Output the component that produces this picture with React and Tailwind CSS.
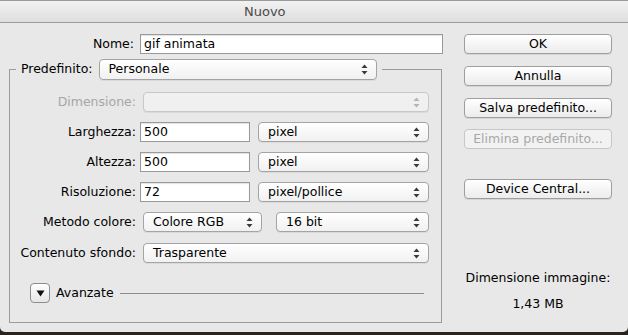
import React from 'react';

const font = { fontFamily: '"DejaVu Sans", "Liberation Sans", sans-serif' };

function Arrows({ disabled }) {
  const c = disabled ? '#b4b4b4' : '#3a3a3a';
  return (
    <svg width="7" height="11" viewBox="0 0 7 11" className="shrink-0">
      <path d="M3.5 0.5 L6.5 4 L0.5 4 Z" fill={c} />
      <path d="M3.5 10.5 L6.5 7 L0.5 7 Z" fill={c} />
    </svg>
  );
}

function Popup({ value, className = '', disabled }) {
  return (
    <div
      className={`h-[20px] flex items-center justify-between pl-[9px] pr-[8px] rounded-[4px] border shadow-[0_1px_0_rgba(0,0,0,0.06)] ${
        disabled
          ? 'border-[#c8c8c8] bg-[#f0f0f0]'
          : 'border-[#a4a4a4] bg-gradient-to-b from-[#ffffff] to-[#f1f1f1]'
      } ${className}`}
    >
      <span className="text-black leading-none">{value}</span>
      <Arrows disabled={disabled} />
    </div>
  );
}

function Field({ value, className = '' }) {
  return (
    <div className={`h-[20px] flex items-center px-[3px] bg-white border border-[#9a9a9a] shadow-[inset_0_1px_1px_rgba(0,0,0,0.12)] leading-none ${className}`}>
      {value}
    </div>
  );
}

function Button({ children, disabled }) {
  return (
    <div
      className={`h-[20px] w-[148px] flex items-center justify-center rounded-[4px] border leading-none ${
        disabled
          ? 'border-[#c6c6c6] bg-[#f2f2f2] text-[#a8a8a8]'
          : 'border-[#9e9e9e] bg-gradient-to-b from-[#ffffff] to-[#ececec] text-black shadow-[0_1px_0_rgba(0,0,0,0.08)]'
      }`}
    >
      {children}
    </div>
  );
}

function Row({ label, children, disabled }) {
  return (
    <div className="flex items-center h-[20px]">
      <div className={`w-[130px] text-right pr-[4px] ${disabled ? 'text-[#a6a6a6]' : 'text-black'}`}>{label}</div>
      {children}
    </div>
  );
}

export default function App() {
  return (
    <div className="w-[628px] h-[335px] bg-[#2a2420] text-[12.5px]" style={font}>
      <div className="h-[332px] bg-[#e8e8e8] rounded-b-[5px] flex flex-col overflow-hidden">
        {/* title bar */}
        <div className="h-[23px] shrink-0 flex items-center pl-[244px] bg-gradient-to-b from-[#f2f2f2] to-[#dedede] border-b border-[#9c9c9c] border-t border-t-[#9a9a9a] text-[#4a4a4a] text-[13px]">
          Nuovo
        </div>

        <div className="flex pt-[11px]">
          {/* left column */}
          <div className="w-[433px] ml-[9px] flex flex-col">
            <div className="flex items-center h-[20px]">
              <div className="w-[131px] text-right pr-[6px]">Nome:</div>
              <Field value="gif animata" className="flex-1 -mr-[1px]" />
            </div>

            <fieldset className="mt-[5px] h-[264px] border border-[#9c9c9c] px-0">
              <legend className="ml-[6px] px-[5px] flex items-center h-[21px]">
                <span className="mr-[6px]">Predefinito:</span>
                <Popup value="Personale" className="w-[278px] h-[21px]" />
              </legend>

              <div className="flex flex-col gap-[10px] mt-[12px]">
                <Row label="Dimensione:" disabled>
                  <Popup value="" disabled className="ml-[3px] w-[286px]" />
                </Row>
                <Row label="Larghezza:">
                  <Field value="500" className="w-[110px]" />
                  <Popup value="pixel" className="ml-[8px] w-[171px]" />
                </Row>
                <Row label="Altezza:">
                  <Field value="500" className="w-[110px]" />
                  <Popup value="pixel" className="ml-[8px] w-[171px]" />
                </Row>
                <Row label="Risoluzione:">
                  <Field value="72" className="w-[110px]" />
                  <Popup value="pixel/pollice" className="ml-[8px] w-[171px]" />
                </Row>
                <Row label="Metodo colore:">
                  <Popup value="Colore RGB" className="ml-[3px] w-[119px]" />
                  <Popup value="16 bit" className="ml-[14px] w-[153px]" />
                </Row>
                <div className="mt-[1px]">
                  <Row label="Contenuto sfondo:">
                    <Popup value="Trasparente" className="ml-[3px] w-[286px]" />
                  </Row>
                </div>
              </div>

              <div className="flex items-center mt-[20px] pl-[20px] pr-[17px]">
                <div className="w-[20px] h-[20px] rounded-[4px] border border-[#8e8e8e] bg-gradient-to-b from-[#ffffff] to-[#e6e6e6] flex items-center justify-center">
                  <svg width="9" height="7" viewBox="0 0 9 7">
                    <path d="M0.5 0.5 L8.5 0.5 L4.5 6.5 Z" fill="#111" />
                  </svg>
                </div>
                <span className="ml-[6px]">Avanzate</span>
                <div className="flex-1 ml-[6px] h-px bg-[#8c8c8c]" />
              </div>
            </fieldset>
          </div>

          {/* right column */}
          <div className="ml-[22px] w-[148px] flex flex-col">
            <div className="flex flex-col gap-[12px]">
              <Button>OK</Button>
              <Button>Annulla</Button>
              <Button>Salva predefinito...</Button>
              <div className="-mt-[1px]">
                <Button disabled>Elimina predefinito...</Button>
              </div>
            </div>
            <div className="mt-[30px]">
              <Button>Device Central...</Button>
            </div>
            <div className="mt-[73px] text-center leading-none">Dimensione immagine:</div>
            <div className="mt-[13px] text-center leading-none">1,43 MB</div>
          </div>
        </div>
      </div>
    </div>
  );
}
